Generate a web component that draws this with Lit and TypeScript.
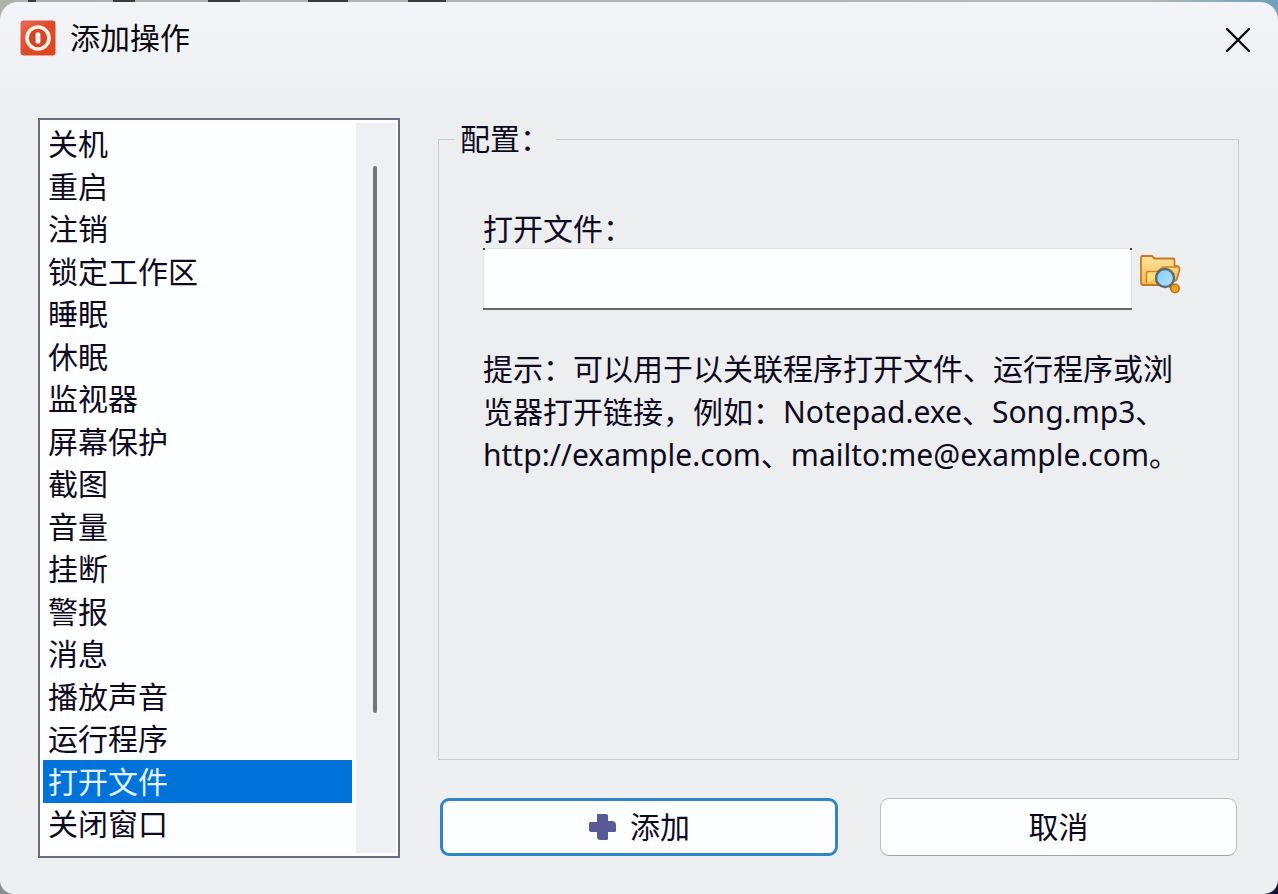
import { LitElement, html, css } from "lit";
import { customElement, state } from "lit/decorators.js";

const ACTIONS = [
  "关机", "重启", "注销", "锁定工作区", "睡眠", "休眠", "监视器", "屏幕保护", "截图",
  "音量", "挂断", "警报", "消息", "播放声音", "运行程序", "打开文件", "关闭窗口",
];

@customElement("app-root")
export class AppRoot extends LitElement {
  static styles = css`
    :host {
      display: block;
      box-sizing: border-box;
      height: 100vh;
      padding-top: 2px;
      color: #0e0a1e;
      background: linear-gradient(to bottom, transparent 50%, #8b8f94 50%) left / 50% 100% no-repeat,
        linear-gradient(to bottom, transparent 50%, #14123a 50%) right / 50% 100% no-repeat,
        linear-gradient(to right, transparent 28px, #3a3b3c 28px 36px, transparent 36px 113px,
          #3a3b3c 113px 135px, transparent 135px 208px, #3a3b3c 208px 240px, transparent 240px 308px,
          #3a3b3c 308px 348px, transparent 348px 408px, #3a3b3c 408px 446px, transparent 446px),
        linear-gradient(to right, #aeb2aa 0%, #b4b8b0 90%, #6fa3bd 99%);
      font: 30px/42px "Noto Sans", "Noto Sans CJK SC", sans-serif;
    }
    * {
      box-sizing: border-box;
    }
    .window {
      display: flex;
      flex-direction: column;
      height: 100%;
      border-radius: 18px 18px 14px 14px;
      background: linear-gradient(to bottom, #f3f4f7 0, #f1f2f5 60px, #edeef0 100px);
      overflow: hidden;
    }
    .titlebar {
      display: flex;
      align-items: center;
      gap: 14px;
      height: 72px;
      padding: 0 28px 0 20px;
      flex: none;
      color: #08060c;
    }
    .title {
      flex: 1;
      margin: 0;
      font: inherit;
    }
    .logo,
    .close,
    .close svg,
    .browse,
    .browse svg {
      display: block;
    }
    .close,
    .browse {
      padding: 0;
      border: 0;
      background: none;
      cursor: pointer;
    }
    .close {
      padding-top: 4px;
    }
    .content {
      flex: 1;
      min-height: 0;
      display: grid;
      grid-template-columns: 362px 1fr;
      gap: 38px;
      padding: 44px 39px 36px 38px;
    }
    .list {
      display: flex;
      min-height: 0;
      padding: 3px 2px 3px 3px;
      border: 2px solid #6c6a80;
      background: #fdfeff;
    }
    .options {
      flex: 1;
      min-width: 0;
      height: 100%;
      margin: 0 4px 0 0;
      padding: 0;
      border: 0;
      outline: 0;
      border-radius: 0;
      background: transparent;
      color: inherit;
      font: inherit;
      overflow: hidden;
      scrollbar-width: none;
    }
    .options option {
      display: flex;
      align-items: flex-end;
      height: 42px;
      min-height: 0;
      padding: 0 0 1px 5px;
      color: #0e0a1e;
    }
    .options option:nth-child(even) {
      height: 43px;
    }
    .options option:checked {
      color: #e3f3ff;
      background: #0073da linear-gradient(#0073da, #0073da);
    }
    .track {
      width: 40px;
      padding: 43px 0 140px 17px;
      background: #eff0f3;
    }
    .thumb {
      width: 4px;
      height: 100%;
      border-radius: 2px;
      background: #77757b;
    }
    .side {
      display: flex;
      flex-direction: column;
      gap: 38px;
      min-width: 0;
    }
    .group {
      flex: 1;
      min-width: 0;
      margin: 0;
      padding: 50px 57px 0 44px;
      border: 1px solid #c9cacc;
    }
    .legend {
      margin-left: -28px;
      padding: 0 6px 0 5px;
    }
    .label {
      display: block;
      line-height: 38px;
    }
    .row {
      display: flex;
      align-items: center;
      gap: 7px;
    }
    .path {
      flex: 1;
      min-width: 0;
      height: 62px;
      padding: 0 8px;
      border: 1px solid transparent;
      border-radius: 0;
      outline: 0;
      background: linear-gradient(#3c3c40, #3c3c40) left top / 2px 2px no-repeat border-box,
        linear-gradient(#3c3c40, #3c3c40) right top / 2px 2px no-repeat border-box,
        linear-gradient(#6a6a6e, #6a6a6e) left bottom / 100% 2px no-repeat border-box,
        linear-gradient(#fdfeff, #fdfeff) padding-box,
        linear-gradient(#e2e3e6, #e2e3e6) border-box;
      color: inherit;
      font: inherit;
    }
    .browse {
      padding-bottom: 10px;
    }
    .hint {
      margin: 37px 0 0;
      line-height: 43px;
      white-space: nowrap;
    }
    .buttons {
      display: grid;
      grid-template-columns: 398fr 357fr;
      gap: 42px;
      padding: 0 2px 2px;
    }
    .button {
      display: flex;
      align-items: center;
      justify-content: center;
      gap: 14px;
      height: 58px;
      padding: 0;
      border: 1px solid #babdc1;
      border-bottom-color: #9fa3a8;
      border-radius: 9px;
      background: #fdfeff;
      color: inherit;
      font: inherit;
      cursor: pointer;
    }
    .primary {
      border: 3px solid #2f86c6;
    }
  `;

  @state() private selected = "打开文件";

  render() {
    return html`
      <div class="window">
        <header class="titlebar">
          <svg class="logo" width="36" height="36" viewBox="0 0 36 36" aria-hidden="true">
            <defs>
              <linearGradient id="red" x1="0" y1="0" x2="1" y2="1">
                <stop offset="0" stop-color="#ea6a52" />
                <stop offset=".5" stop-color="#dc4a2d" />
                <stop offset="1" stop-color="#e5431c" />
              </linearGradient>
            </defs>
            <rect x=".5" y=".5" width="35" height="35" rx="3" fill="url(#red)" />
            <circle cx="18" cy="18" r="11" fill="#d2452c" stroke="#fff0e2" stroke-width="3.6" />
            <rect x="15.6" y="12.5" width="4.8" height="11" rx="1.6" fill="#fff6ee" />
          </svg>
          <h1 class="title">添加操作</h1>
          <button class="close" type="button" aria-label="关闭">
            <svg width="24" height="24" viewBox="0 0 24 24">
              <path d="M1 1 23 23M23 1 1 23" fill="none" stroke="#08080a" stroke-width="2.4" stroke-linecap="round" />
            </svg>
          </button>
        </header>
        <main class="content">
          <div class="list">
            <select
              class="options"
              size="17"
              aria-label="操作"
              @change=${(e: Event) => (this.selected = (e.target as HTMLSelectElement).value)}
            >
              ${ACTIONS.map((name) => html`<option ?selected=${name === this.selected}>${name}</option>`)}
            </select>
            <div class="track"><div class="thumb"></div></div>
          </div>
          <div class="side">
            <fieldset class="group">
              <legend class="legend">配置：</legend>
              <label class="label" for="path">打开文件：</label>
              <div class="row">
                <input class="path" id="path" type="text" />
                <button class="browse" type="button" aria-label="浏览">
                  <svg width="42" height="42" viewBox="0 0 42 42">
                    <defs>
                      <linearGradient id="folder" x1="0" y1="0" x2="0" y2="1">
                        <stop offset="0" stop-color="#ffe2a0" />
                        <stop offset="1" stop-color="#f6bd4d" />
                      </linearGradient>
                      <linearGradient id="lens" x1="0" y1="0" x2="1" y2="1">
                        <stop offset="0" stop-color="#85c9f5" />
                        <stop offset="1" stop-color="#b5e4ff" />
                      </linearGradient>
                    </defs>
                    <path d="M2 4.500q0-1.500 1.500-1.500H13l2.500 2.500H34q1.500 0 1.500 1.500v6h1.500q4 0 3.500 4l-3 10-10 5H4.500Q2 32 2 30Z" fill="url(#folder)" stroke="#c17a26" stroke-width="1.800" stroke-linejoin="round" />
                    <path d="M7.500 30V20q0-1.500 1.500-1.500h9l6-4.500h14" fill="#fde07a" stroke="#c9852d" stroke-width="1.500" stroke-linejoin="round" />
                    <path d="m30 31 5 4" stroke="#8a6a42" stroke-width="5" />
                    <circle cx="26" cy="25" r="9" fill="url(#lens)" stroke="#5b6a70" stroke-width="2.4" />
                    <circle cx="36" cy="35.500" r="4.200" fill="#f0a21c" stroke="#b87320" stroke-width="1.600" />
                  </svg>
                </button>
              </div>
              <p class="hint">
                提示：可以用于以关联程序打开文件、运行程序或浏<br />览器打开链接，例如：Notepad.exe、Song.mp3、<br />http://example.com、mailto:me@example.com。
              </p>
            </fieldset>
            <div class="buttons">
              <button class="button primary" type="button">
                <svg width="28" height="28" viewBox="0 0 28 28" aria-hidden="true">
                  <path d="M9 1h9q2 0 2 2v5h5q3 1 3 4v6q0 1-1 1h-7v7q0 1-1 1h-6q-4 0-4-3v-5H3l-2-1V10l1-1h7Z" fill="#5a5a98" />
                </svg>
                添加
              </button>
              <button class="button" type="button">取消</button>
            </div>
          </div>
        </main>
      </div>
    `;
  }
}
